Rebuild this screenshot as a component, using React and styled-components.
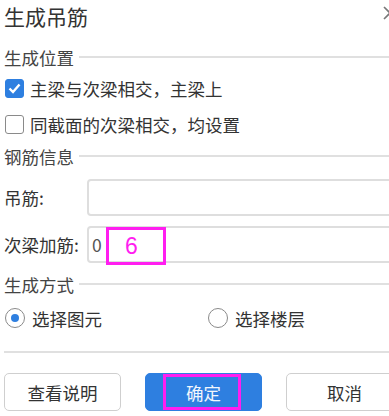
import React from "react";
import styled, { createGlobalStyle } from "styled-components";

const Global = createGlobalStyle`
  html, body { margin: 0; padding: 0; background: #fff; overflow: hidden; }
  body { font-family: "Noto Sans CJK SC", "Microsoft YaHei", sans-serif; color: #333; }
`;

const Dialog = styled.div`
  position: relative;
  width: 400px;
  height: 416px;
  padding-left: 4px;
  box-sizing: border-box;
  display: flex;
  flex-direction: column;
`;

const Header = styled.div`
  height: 32px;
  display: flex;
  align-items: center;
  font-size: 21px;
  color: #333;
`;

const Close = styled.svg`
  position: absolute;
  left: 383px;
  top: 6px;
`;

const SectionTitle = styled.div`
  display: flex;
  align-items: center;
  height: 22px;
  font-size: 17.5px;
  color: #444;
  margin-top: ${(p) => p.$mt}px;
  &::after {
    content: "";
    flex: 1;
    height: 2px;
    background: #e0e0e0;
    margin-left: 5px;
  }
`;

const CheckRow = styled.label`
  display: flex;
  align-items: center;
  height: 36px;
  font-size: 17.5px;
  margin-top: ${(p) => p.$mt || 0}px;
  gap: 6px;
  padding-left: 1px;
`;

const Box = styled.span`
  width: 19px;
  height: 19px;
  box-sizing: border-box;
  border-radius: 3px;
  border: 1.5px solid ${(p) => (p.$on ? "#2e7fe0" : "#8a8a8a")};
  background: ${(p) => (p.$on ? "#2e7fe0" : "#fff")};
  display: flex;
  align-items: center;
  justify-content: center;
`;

const FieldRow = styled.div`
  display: grid;
  grid-template-columns: 83px 1fr;
  align-items: center;
  margin-top: ${(p) => p.$mt}px;
  font-size: 17.5px;
`;

const Input = styled.div`
  position: relative;
  height: 37px;
  box-sizing: border-box;
  border: 2px solid #dedede;
  border-radius: 4px;
  display: flex;
  align-items: center;
  padding-left: 3px;
  font-size: 17.5px;
  color: #555;
`;

const Mark = styled.div`
  position: absolute;
  left: 17px;
  top: -1px;
  width: 60px;
  height: 38px;
  box-sizing: border-box;
  border: 3px solid #ff1ef0;
  color: #ff1ef0;
  font-family: "Liberation Sans", sans-serif;
  font-size: 23px;
  display: flex;
  align-items: center;
  padding-left: 16px;
`;

const RadioRow = styled.div`
  display: grid;
  grid-template-columns: 203px 1fr;
  height: 36px;
  margin-top: 5px;
  font-size: 17.5px;
  padding-left: 1px;
`;

const RadioOpt = styled.label`
  display: flex;
  align-items: center;
  gap: 7px;
`;

const Circle = styled.span`
  width: 20px;
  height: 20px;
  box-sizing: border-box;
  border-radius: 50%;
  border: 1.5px solid #8a8a8a;
  display: flex;
  align-items: center;
  justify-content: center;
  &::after {
    content: "";
    width: 8px;
    height: 8px;
    border-radius: 50%;
    background: ${(p) => (p.$on ? "#2e7fe0" : "transparent")};
  }
`;

const Divider = styled.div`
  height: 2px;
  background: #e0e0e0;
  margin-top: 15px;
`;

const Buttons = styled.div`
  display: flex;
  gap: 24px;
  margin-top: 20px;
`;

const Button = styled.button`
  position: relative;
  width: 117px;
  height: 38px;
  flex: none;
  border-radius: 5px;
  border: 1px solid ${(p) => (p.$primary ? "#2e7fe0" : "#cfcfcf")};
  background: ${(p) => (p.$primary ? "#2e7fe0" : "#fff")};
  color: ${(p) => (p.$primary ? "#f2f6fc" : "#333")};
  font-family: "Noto Sans CJK SC", sans-serif;
  font-size: 17.5px;
  padding: 0;
`;

const ButtonMark = styled.span`
  position: absolute;
  left: 17px;
  top: 0px;
  width: 78px;
  height: 36px;
  box-sizing: border-box;
  border: 3px solid #ff1ef0;
`;

export default function App() {
  return (
    <>
      <Global />
      <Dialog>
        <Header>生成吊筋</Header>
        <Close width="14" height="14" viewBox="0 0 14 14">
          <path d="M1 1 L13 13 M13 1 L1 13" stroke="#777" strokeWidth="1.6" fill="none" />
        </Close>
        <SectionTitle $mt={14}>生成位置</SectionTitle>
        <CheckRow $mt={2}>
          <Box $on>
            <svg width="13" height="11" viewBox="0 0 13 11">
              <path d="M1.5 5.5 L5 9 L11.5 1.5" stroke="#fff" strokeWidth="2.4" fill="none" />
            </svg>
          </Box>
          主梁与次梁相交，主梁上
        </CheckRow>
        <CheckRow>
          <Box />
          同截面的次梁相交，均设置
        </CheckRow>
        <SectionTitle $mt={3}>钢筋信息</SectionTitle>
        <FieldRow $mt={12}>
          <span>吊筋:</span>
          <Input />
        </FieldRow>
        <FieldRow $mt={10}>
          <span>次梁加筋:</span>
          <Input>
            0
            <Mark>6</Mark>
          </Input>
        </FieldRow>
        <SectionTitle $mt={10}>生成方式</SectionTitle>
        <RadioRow>
          <RadioOpt>
            <Circle $on />
            选择图元
          </RadioOpt>
          <RadioOpt>
            <Circle />
            选择楼层
          </RadioOpt>
        </RadioRow>
        <Divider />
        <Buttons>
          <Button>查看说明</Button>
          <Button $primary>
            确定
            <ButtonMark />
          </Button>
          <Button>取消</Button>
        </Buttons>
      </Dialog>
    </>
  );
}
